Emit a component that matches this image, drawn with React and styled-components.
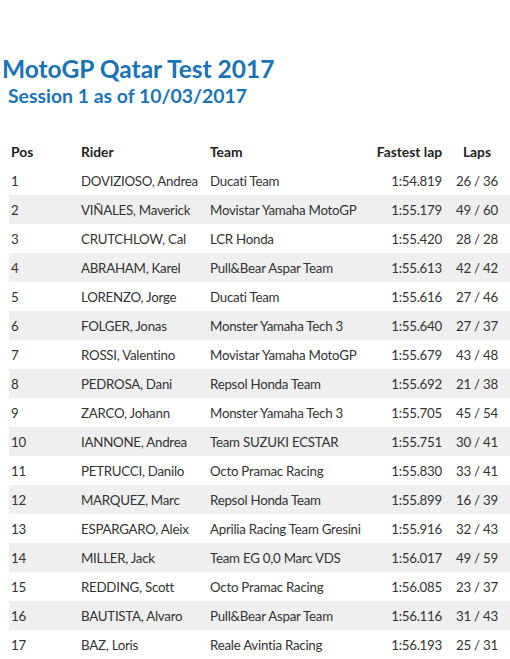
import React from "react";
import styled, { createGlobalStyle } from "styled-components";

const Global = createGlobalStyle`
  html, body { margin: 0; padding: 0; background: #fff; }
  body { font-family: Lato, "Open Sans", sans-serif; color: #333; }
`;

const Page = styled.div`
  width: 510px;
  padding-top: 55px;
`;

const Title = styled.h1`
  margin: 0 0 0 2px;
  font-size: 24.5px;
  line-height: 28px;
  font-weight: 700;
  color: #1a73b8;
`;

const Subtitle = styled.h2`
  margin: 2px 0 0 8px;
  font-size: 19.4px;
  line-height: 22px;
  font-weight: 700;
  color: #1a73b8;
`;

const Table = styled.table`
  margin: 30px 0 0 9px;
  width: 501px;
  border-collapse: collapse;
  table-layout: fixed;
  font-size: 13.3px;
  letter-spacing: -0.25px;
`;

const Th = styled.th`
  height: 29px;
  padding: 0 2px;
  text-align: ${p => p.$align || "left"};
  font-weight: 700;
  font-size: 13.8px;
  letter-spacing: 0;
  color: #222;
`;

const Row = styled.tr`
  background: ${p => (p.$striped ? "#efefef" : "#fff")};
`;

const Td = styled.td`
  height: 29px;
  padding: 0 2px;
  text-align: ${p => p.$align || "left"};
  white-space: nowrap;
  color: #333;
`;

const data = [
  ["1", "DOVIZIOSO, Andrea", "Ducati Team", "1:54.819", "26 / 36"],
  ["2", "VIÑALES, Maverick", "Movistar Yamaha MotoGP", "1:55.179", "49 / 60"],
  ["3", "CRUTCHLOW, Cal", "LCR Honda", "1:55.420", "28 / 28"],
  ["4", "ABRAHAM, Karel", "Pull&Bear Aspar Team", "1:55.613", "42 / 42"],
  ["5", "LORENZO, Jorge", "Ducati Team", "1:55.616", "27 / 46"],
  ["6", "FOLGER, Jonas", "Monster Yamaha Tech 3", "1:55.640", "27 / 37"],
  ["7", "ROSSI, Valentino", "Movistar Yamaha MotoGP", "1:55.679", "43 / 48"],
  ["8", "PEDROSA, Dani", "Repsol Honda Team", "1:55.692", "21 / 38"],
  ["9", "ZARCO, Johann", "Monster Yamaha Tech 3", "1:55.705", "45 / 54"],
  ["10", "IANNONE, Andrea", "Team SUZUKI ECSTAR", "1:55.751", "30 / 41"],
  ["11", "PETRUCCI, Danilo", "Octo Pramac Racing", "1:55.830", "33 / 41"],
  ["12", "MARQUEZ, Marc", "Repsol Honda Team", "1:55.899", "16 / 39"],
  ["13", "ESPARGARO, Aleix", "Aprilia Racing Team Gresini", "1:55.916", "32 / 43"],
  ["14", "MILLER, Jack", "Team EG 0,0 Marc VDS", "1:56.017", "49 / 59"],
  ["15", "REDDING, Scott", "Octo Pramac Racing", "1:56.085", "23 / 37"],
  ["16", "BAUTISTA, Alvaro", "Pull&Bear Aspar Team", "1:56.116", "31 / 43"],
  ["17", "BAZ, Loris", "Reale Avintia Racing", "1:56.193", "25 / 31"],
];

export default function App() {
  return (
    <Page>
      <Global />
      <Title>MotoGP Qatar Test 2017</Title>
      <Subtitle>Session 1 as of 10/03/2017</Subtitle>
      <Table>
        <colgroup>
          <col style={{ width: 70 }} />
          <col style={{ width: 129 }} />
          <col style={{ width: 166 }} />
          <col style={{ width: 70 }} />
          <col style={{ width: 66 }} />
        </colgroup>
        <thead>
          <tr>
            <Th>Pos</Th>
            <Th>Rider</Th>
            <Th>Team</Th>
            <Th $align="right">Fastest lap</Th>
            <Th $align="center">Laps</Th>
          </tr>
        </thead>
        <tbody>
          {data.map((r, i) => (
            <Row key={r[0]} $striped={i % 2 === 1}>
              <Td>{r[0]}</Td>
              <Td>{r[1]}</Td>
              <Td>{r[2]}</Td>
              <Td $align="right">{r[3]}</Td>
              <Td $align="center">{r[4]}</Td>
            </Row>
          ))}
        </tbody>
      </Table>
    </Page>
  );
}
